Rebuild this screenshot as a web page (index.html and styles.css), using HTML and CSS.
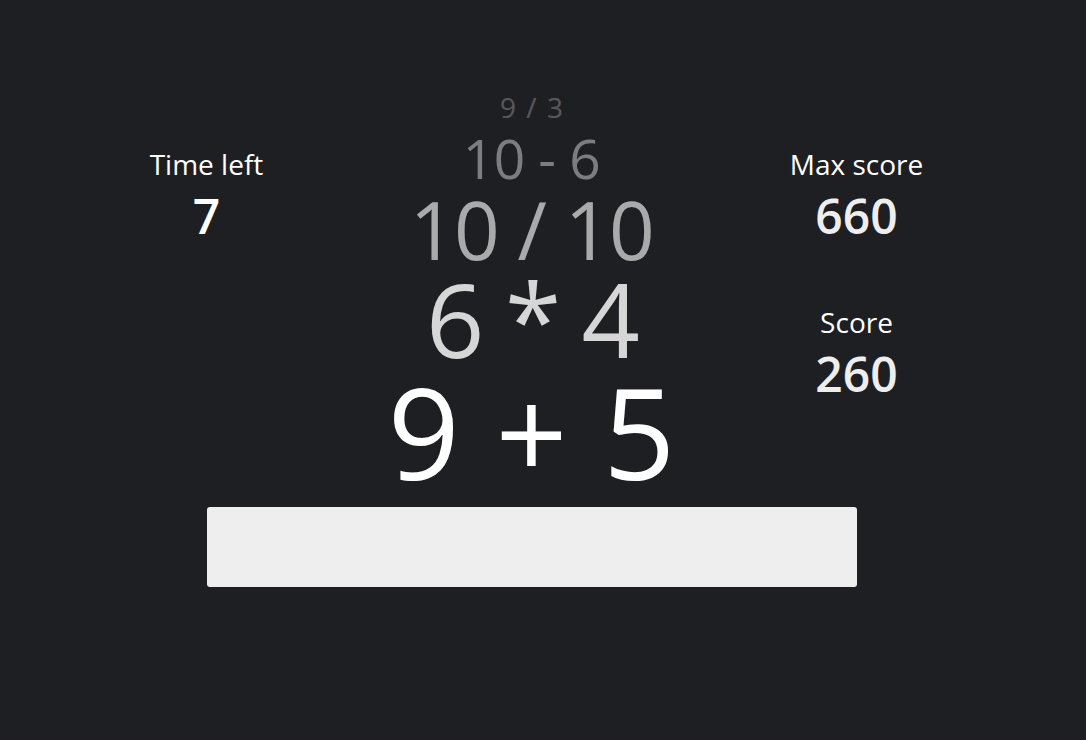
FILE: index.html
```html
<!DOCTYPE html>
<html lang="en">
<head>
<meta charset="utf-8">
<title>Math game</title>
<link rel="stylesheet" href="styles.css">
</head>
<body>
<main class="game">
  <section class="board">
    <div class="side side-left">
      <div class="stat">
        <div class="label">Time left</div>
        <div class="value">7</div>
      </div>
    </div>
    <div class="queue">
      <div class="expr e1">9 / 3</div>
      <div class="expr e2">10 - 6</div>
      <div class="expr e3">10 / 10</div>
      <div class="expr e4">6 * 4</div>
      <div class="expr e5">9 + 5</div>
    </div>
    <div class="side side-right">
      <div class="stat">
        <div class="label">Max score</div>
        <div class="value">660</div>
      </div>
      <div class="stat stat-gap">
        <div class="label">Score</div>
        <div class="value">260</div>
      </div>
    </div>
  </section>
  <div class="answer-row">
    <input class="answer" type="text" aria-label="Answer">
  </div>
</main>
</body>
</html>
```

FILE: styles.css
```css
html, body {
  margin: 0;
  padding: 0;
  background: #1e1f23;
}

body {
  font-family: "Open Sans", "Noto Sans", "Liberation Sans", sans-serif;
  color: #ffffff;
  height: 740px;
  overflow: hidden;
}

.game {
  width: 975px;
  margin-left: 44px;
  padding-top: 88px;
}

.board {
  display: grid;
  grid-template-columns: 325px 325px 325px;
  align-items: start;
}

.side {
  display: flex;
  flex-direction: column;
  align-items: center;
  padding-top: 57px;
}

.stat {
  display: flex;
  flex-direction: column;
  align-items: center;
}

.stat-gap {
  margin-top: 54px;
}

.label {
  font-size: 28px;
  line-height: 38px;
  color: #ffffff;
}

.value {
  font-size: 48px;
  line-height: 66px;
  font-weight: 600;
  color: #eeeeee;
}

.side-left .value {
  color: #ffffff;
}

.queue {
  display: flex;
  flex-direction: column;
  align-items: center;
}

.expr {
  white-space: pre;
  color: #ffffff;
}

.e1 { font-size: 28px; line-height: 38px; opacity: 0.25; word-spacing: 3px; }
.e2 { font-size: 55px; line-height: 63px; opacity: 0.42; letter-spacing: -0.5px; }
.e3 { font-size: 80px; line-height: 80px; opacity: 0.62; letter-spacing: -1.5px; }
.e4 { font-size: 102px; line-height: 100px; opacity: 0.82; letter-spacing: -3px; }
.e5 { font-size: 126px; line-height: 125px; opacity: 1; word-spacing: 3px; }

.answer-row {
  padding-top: 13px;
  padding-left: 163px;
}

.answer {
  display: block;
  box-sizing: border-box;
  width: 650px;
  height: 80px;
  border: none;
  border-radius: 3px;
  background: #eeeeee;
  padding: 0 12px;
  font-family: inherit;
  font-size: 40px;
  outline: none;
}
```
